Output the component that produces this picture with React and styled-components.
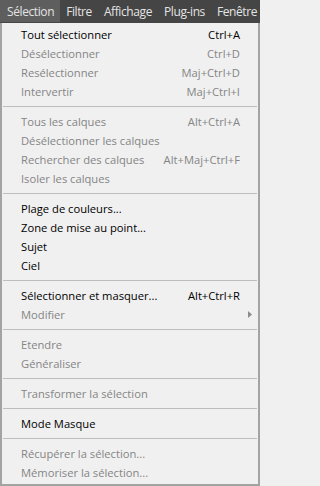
import React from "react";
import styled, { createGlobalStyle } from "styled-components";

const GlobalStyle = createGlobalStyle`
	html, body {
		margin: 0;
		padding: 0;
		background: #f0f0f0;
	}
	body {
		font-family: "Open Sans", "Noto Sans", "Liberation Sans", sans-serif;
	}
`;

const menus = ["Sélection", "Filtre", "Affichage", "Plug-ins", "Fenêtre"];

const groups = [
	[
		{ label: "Tout sélectionner", shortcut: "Ctrl+A", on: true },
		{ label: "Désélectionner", shortcut: "Ctrl+D" },
		{ label: "Resélectionner", shortcut: "Maj+Ctrl+D" },
		{ label: "Intervertir", shortcut: "Maj+Ctrl+I" },
	],
	[
		{ label: "Tous les calques", shortcut: "Alt+Ctrl+A" },
		{ label: "Désélectionner les calques" },
		{ label: "Rechercher des calques", shortcut: "Alt+Maj+Ctrl+F" },
		{ label: "Isoler les calques" },
	],
	[
		{ label: "Plage de couleurs...", on: true },
		{ label: "Zone de mise au point...", on: true },
		{ label: "Sujet", on: true },
		{ label: "Ciel", on: true },
	],
	[
		{ label: "Sélectionner et masquer...", shortcut: "Alt+Ctrl+R", on: true },
		{ label: "Modifier", submenu: true },
	],
	[{ label: "Etendre" }, { label: "Généraliser" }],
	[{ label: "Transformer la sélection" }],
	[{ label: "Mode Masque", on: true }],
	[
		{ label: "Récupérer la sélection..." },
		{ label: "Mémoriser la sélection..." },
	],
];

export default function App() {
	return (
		<>
			<GlobalStyle />
			<Window>
				<MenuBar>
					{menus.map((name, index) => (
						<MenuTitle key={name} $active={index === 0}>
							{name}
						</MenuTitle>
					))}
				</MenuBar>
				<Panel>
					{groups.map((group, gi) => (
						<React.Fragment key={gi}>
							{gi > 0 && <Separator />}
							{group.map((item) => (
								<Item key={item.label} $on={item.on}>
									<Label>{item.label}</Label>
									{item.shortcut && <span>{item.shortcut}</span>}
									{item.submenu && (
										<Arrow viewBox="0 0 4 7">
											<path d="M0 0 L4 3.5 L0 7 Z" fill="#8c8c8c" />
										</Arrow>
									)}
								</Item>
							))}
						</React.Fragment>
					))}
				</Panel>
			</Window>
		</>
	);
}

const Window = styled.div`
	width: 260px;
	height: 486px;
	display: flex;
	flex-direction: column;
	overflow: hidden;
	background: #454545;
`;

const MenuBar = styled.div`
	height: 22px;
	flex-shrink: 0;
	display: flex;
	align-items: stretch;
	background: #454545;
	white-space: nowrap;
	overflow: hidden;
`;

const MenuTitle = styled.div`
	display: flex;
	align-items: center;
	padding: 0 ${(p) => (p.$active ? "6px" : "6px")} 0 ${(p) => (p.$active ? "7px" : "6px")};
	font-size: 12px;
	letter-spacing: -0.4px;
	color: #e4e4e4;
	background: ${(p) => (p.$active ? "#5e5e5e" : "transparent")};
`;

const Panel = styled.div`
	flex: 1;
	margin-top: 1px;
	padding: 2px 0 0 1px;
	background: #f0f0f0;
	border-left: 2px solid #a3a3a3;
	border-right: 2px solid #a3a3a3;
	border-bottom: 2px solid #a3a3a3;
	display: flex;
	flex-direction: column;
`;

const Item = styled.div`
	height: 19px;
	flex-shrink: 0;
	display: flex;
	align-items: center;
	padding: 0 18px 0 18px;
	font-size: 11.2px;
	color: ${(p) => (p.$on ? "#000000" : "#858585")};
	white-space: nowrap;
`;

const Label = styled.span`
	flex: 1;
`;

const Arrow = styled.svg`
	width: 4px;
	height: 7px;
	margin-right: -12px;
`;

const Separator = styled.div`
	height: 1px;
	flex-shrink: 0;
	margin: 5px 1px 5px 0;
	background: #bdbdbd;
`;
